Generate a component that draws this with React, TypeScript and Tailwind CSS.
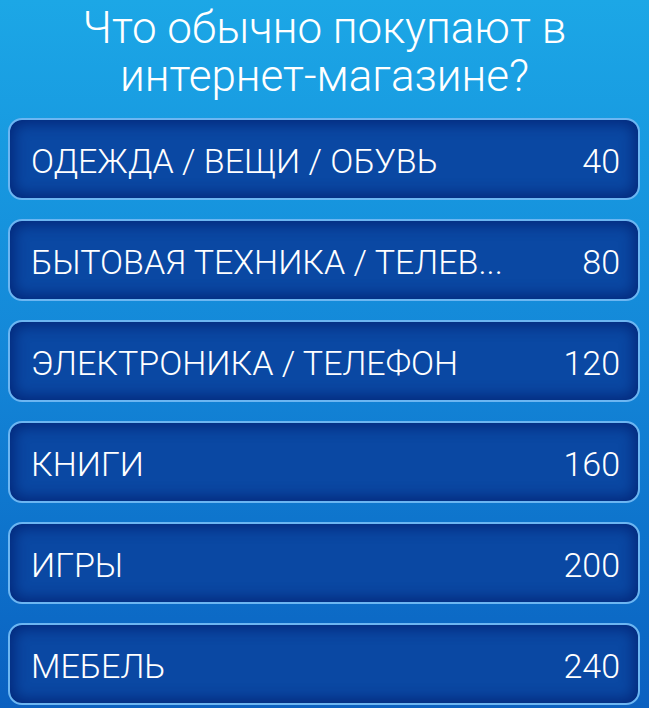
const answers = [
  { label: 'ОДЕЖДА / ВЕЩИ / ОБУВЬ', points: 40 },
  { label: 'БЫТОВАЯ ТЕХНИКА / ТЕЛЕВ...', points: 80 },
  { label: 'ЭЛЕКТРОНИКА / ТЕЛЕФОН', points: 120 },
  { label: 'КНИГИ', points: 160 },
  { label: 'ИГРЫ', points: 200 },
  { label: 'МЕБЕЛЬ', points: 240 },
];

function AnswerRow({ label, points }: { label: string; points: number }) {
  return (
    <div className="h-[82px] rounded-[14px] border-2 border-[#6cb6f2] bg-[#0a48a3] shadow-[inset_0_0_14px_4px_rgba(2,30,110,0.75)] flex items-center justify-between pl-[21px] pr-[18px]">
      <span className="pt-[3px] text-[34px] leading-none font-light text-white">{label}</span>
      <span className="pt-[3px] text-[34px] leading-none font-light text-white">{points}</span>
    </div>
  );
}

export default function App() {
  return (
    <div
      className="w-[649px] h-[708px] overflow-hidden bg-gradient-to-b from-[#1ca7e6] via-[#1487d8] to-[#0b60c0] flex flex-col"
      style={{ fontFamily: 'Roboto, "Liberation Sans", sans-serif' }}
    >
      <h1 className="pt-[4px] text-center text-white text-[44px] leading-[48px] font-light">
        Что обычно покупают в
        <br />
        интернет-магазине?
      </h1>
      <div className="mt-[18px] flex flex-col gap-[19px] pl-[8px] pr-[9px]">
        {answers.map((a) => (
          <AnswerRow key={a.points} label={a.label} points={a.points} />
        ))}
      </div>
    </div>
  );
}
